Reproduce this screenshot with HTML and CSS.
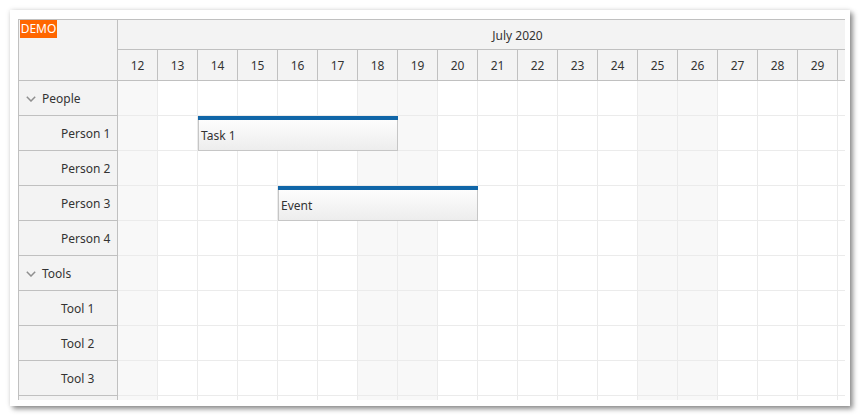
FILE: index.html
```html
<!DOCTYPE html>
<html>
<head>
<meta charset="utf-8">
<link rel="stylesheet" href="styles.css">
</head>
<body>
<div class="frame">
  <div class="scheduler">
    <div class="side">
      <div class="corner"><span class="demo">DEMO</span></div>
      <div class="rh group"><span class="chev"><svg width="10" height="6" viewBox="0 0 10 6"><path d="M0.8 0.8 L5 5 L9.2 0.8" fill="none" stroke="#8f8f8f" stroke-width="1.5"/></svg></span>People</div>
      <div class="rh child">Person 1</div>
      <div class="rh child">Person 2</div>
      <div class="rh child">Person 3</div>
      <div class="rh child">Person 4</div>
      <div class="rh group"><span class="chev"><svg width="10" height="6" viewBox="0 0 10 6"><path d="M0.8 0.8 L5 5 L9.2 0.8" fill="none" stroke="#8f8f8f" stroke-width="1.5"/></svg></span>Tools</div>
      <div class="rh child">Tool 1</div>
      <div class="rh child">Tool 2</div>
      <div class="rh child">Tool 3</div>
      <div class="rh child"></div>
    </div>
    <div class="main">
      <div class="timeline">
        <div class="month-row"><div class="month">July 2020</div></div>
        <div class="day-row">
          <div class="day">12</div><div class="day">13</div><div class="day">14</div><div class="day">15</div><div class="day">16</div><div class="day">17</div><div class="day">18</div><div class="day">19</div><div class="day">20</div><div class="day">21</div><div class="day">22</div><div class="day">23</div><div class="day">24</div><div class="day">25</div><div class="day">26</div><div class="day">27</div><div class="day">28</div><div class="day">29</div><div class="day"></div><div class="day"></div>
        </div>
      </div>
      <div class="grid">
        <div class="row"><div class="c we"></div><div class="c"></div><div class="c"></div><div class="c"></div><div class="c"></div><div class="c"></div><div class="c we"></div><div class="c we"></div><div class="c"></div><div class="c"></div><div class="c"></div><div class="c"></div><div class="c"></div><div class="c we"></div><div class="c we"></div><div class="c"></div><div class="c"></div><div class="c"></div><div class="c"></div><div class="c"></div></div>
        <div class="row"><div class="c we"></div><div class="c"></div><div class="c"></div><div class="c"></div><div class="c"></div><div class="c"></div><div class="c we"></div><div class="c we"></div><div class="c"></div><div class="c"></div><div class="c"></div><div class="c"></div><div class="c"></div><div class="c we"></div><div class="c we"></div><div class="c"></div><div class="c"></div><div class="c"></div><div class="c"></div><div class="c"></div></div>
        <div class="row"><div class="c we"></div><div class="c"></div><div class="c"></div><div class="c"></div><div class="c"></div><div class="c"></div><div class="c we"></div><div class="c we"></div><div class="c"></div><div class="c"></div><div class="c"></div><div class="c"></div><div class="c"></div><div class="c we"></div><div class="c we"></div><div class="c"></div><div class="c"></div><div class="c"></div><div class="c"></div><div class="c"></div></div>
        <div class="row"><div class="c we"></div><div class="c"></div><div class="c"></div><div class="c"></div><div class="c"></div><div class="c"></div><div class="c we"></div><div class="c we"></div><div class="c"></div><div class="c"></div><div class="c"></div><div class="c"></div><div class="c"></div><div class="c we"></div><div class="c we"></div><div class="c"></div><div class="c"></div><div class="c"></div><div class="c"></div><div class="c"></div></div>
        <div class="row"><div class="c we"></div><div class="c"></div><div class="c"></div><div class="c"></div><div class="c"></div><div class="c"></div><div class="c we"></div><div class="c we"></div><div class="c"></div><div class="c"></div><div class="c"></div><div class="c"></div><div class="c"></div><div class="c we"></div><div class="c we"></div><div class="c"></div><div class="c"></div><div class="c"></div><div class="c"></div><div class="c"></div></div>
        <div class="row"><div class="c we"></div><div class="c"></div><div class="c"></div><div class="c"></div><div class="c"></div><div class="c"></div><div class="c we"></div><div class="c we"></div><div class="c"></div><div class="c"></div><div class="c"></div><div class="c"></div><div class="c"></div><div class="c we"></div><div class="c we"></div><div class="c"></div><div class="c"></div><div class="c"></div><div class="c"></div><div class="c"></div></div>
        <div class="row"><div class="c we"></div><div class="c"></div><div class="c"></div><div class="c"></div><div class="c"></div><div class="c"></div><div class="c we"></div><div class="c we"></div><div class="c"></div><div class="c"></div><div class="c"></div><div class="c"></div><div class="c"></div><div class="c we"></div><div class="c we"></div><div class="c"></div><div class="c"></div><div class="c"></div><div class="c"></div><div class="c"></div></div>
        <div class="row"><div class="c we"></div><div class="c"></div><div class="c"></div><div class="c"></div><div class="c"></div><div class="c"></div><div class="c we"></div><div class="c we"></div><div class="c"></div><div class="c"></div><div class="c"></div><div class="c"></div><div class="c"></div><div class="c we"></div><div class="c we"></div><div class="c"></div><div class="c"></div><div class="c"></div><div class="c"></div><div class="c"></div></div>
        <div class="row"><div class="c we"></div><div class="c"></div><div class="c"></div><div class="c"></div><div class="c"></div><div class="c"></div><div class="c we"></div><div class="c we"></div><div class="c"></div><div class="c"></div><div class="c"></div><div class="c"></div><div class="c"></div><div class="c we"></div><div class="c we"></div><div class="c"></div><div class="c"></div><div class="c"></div><div class="c"></div><div class="c"></div></div>
        <div class="row"><div class="c we"></div><div class="c"></div><div class="c"></div><div class="c"></div><div class="c"></div><div class="c"></div><div class="c we"></div><div class="c we"></div><div class="c"></div><div class="c"></div><div class="c"></div><div class="c"></div><div class="c"></div><div class="c we"></div><div class="c we"></div><div class="c"></div><div class="c"></div><div class="c"></div><div class="c"></div><div class="c"></div></div>
        <div class="event" style="left:80px; top:35px;"><span class="event-text">Task 1</span></div>
        <div class="event" style="left:160px; top:105px;"><span class="event-text">Event</span></div>
      </div>
    </div>
  </div>
</div>
</body>
</html>
```

FILE: styles.css
```css
html, body {
  margin: 0;
  padding: 0;
  background: #ffffff;
}

body {
  font-family: "Noto Sans", "Open Sans", Arial, sans-serif;
  font-size: 12px;
  color: #333333;
}

.frame {
  box-sizing: border-box;
  margin: 10px;
  width: 840px;
  height: 396px;
  padding: 9px 0 0 8px;
  background: #ffffff;
  box-shadow: 0 0 5px rgba(0, 0, 0, 0.12), 3px 3px 5px rgba(0, 0, 0, 0.42);
}

.scheduler {
  box-sizing: border-box;
  width: 827px;
  height: 381px;
  border-left: 1px solid #c0c0c0;
  border-top: 1px solid #c0c0c0;
  display: flex;
  overflow: hidden;
}

.side {
  flex: 0 0 99px;
  box-sizing: border-box;
  width: 99px;
  border-right: 1px solid #c0c0c0;
  background: #f3f3f3;
  display: flex;
  flex-direction: column;
}

.corner {
  position: relative;
  box-sizing: border-box;
  flex: 0 0 61px;
  height: 61px;
  border-bottom: 1px solid #c0c0c0;
}

.demo {
  position: absolute;
  left: 1px;
  top: 0;
  width: 37px;
  height: 18px;
  line-height: 18px;
  background: #ff6600;
  color: #ffffff;
  font-size: 12px;
  text-align: center;
}

.rh {
  box-sizing: border-box;
  flex: 0 0 35px;
  height: 35px;
  padding-top: 1px;
  border-bottom: 1px solid #c0c0c0;
  display: flex;
  align-items: center;
  white-space: nowrap;
}

.rh.group {
  padding-left: 7px;
}

.chev {
  display: inline-flex;
  width: 10px;
  height: 6px;
  margin-right: 6px;
  margin-top: 1px;
}

.rh.child {
  padding-left: 42px;
}

.main {
  flex: 0 0 727px;
  width: 727px;
  overflow: hidden;
}

.timeline {
  width: 800px;
  background: #f3f3f3;
}

.month-row {
  display: flex;
  height: 30px;
}

.month {
  box-sizing: border-box;
  width: 800px;
  height: 30px;
  padding-top: 1px;
  border-bottom: 1px solid #c0c0c0;
  border-right: 1px solid #c0c0c0;
  display: flex;
  align-items: center;
  justify-content: center;
}

.day-row {
  display: flex;
  height: 31px;
}

.day {
  box-sizing: border-box;
  flex: 0 0 40px;
  width: 40px;
  height: 31px;
  padding-top: 1px;
  border-right: 1px solid #c0c0c0;
  border-bottom: 1px solid #c0c0c0;
  display: flex;
  align-items: center;
  justify-content: center;
}

.grid {
  position: relative;
  width: 800px;
}

.row {
  display: flex;
  height: 35px;
}

.c {
  box-sizing: border-box;
  flex: 0 0 40px;
  width: 40px;
  height: 35px;
  border-right: 1px solid #ebebeb;
  border-bottom: 1px solid #ebebeb;
  background: #ffffff;
}

.c.we {
  background: #f8f8f8;
}

.event {
  position: absolute;
  box-sizing: border-box;
  width: 200px;
  height: 35px;
  padding-top: 4px;
  border: 1px solid #c6c6c6;
  border-top: none;
  background: linear-gradient(to bottom, #ffffff 0%, #ededed 100%);
  display: flex;
  align-items: center;
}

.event::before {
  content: "";
  position: absolute;
  left: -1px;
  right: -1px;
  top: 0;
  height: 4px;
  background: #1066a8;
}

.event-text {
  padding-left: 2px;
  white-space: nowrap;
}
```
